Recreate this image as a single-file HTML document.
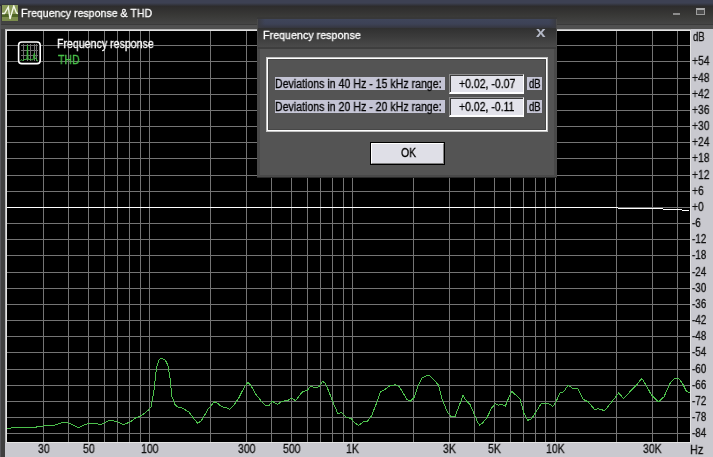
<!DOCTYPE html>
<html><head><meta charset="utf-8"><title>Frequency response &amp; THD</title>
<style>
html,body{margin:0;padding:0}
body{width:713px;height:457px;overflow:hidden;position:relative;background:#3f3f3f;font-family:"Liberation Sans",sans-serif;font-size:12px;line-height:13px;color:#111}
div,span{position:absolute;box-sizing:border-box;white-space:nowrap}
.t{transform-origin:0 0;will-change:transform;-webkit-text-stroke:0.3px}
#topstrip{left:0;top:0;width:713px;height:6px;background:linear-gradient(#3d4153 0,#3d4153 50%,#2e2e30 100%)}
#tbar{left:0;top:6px;width:713px;height:19px;background:linear-gradient(#2d2c2c,#3a3a38 55%,#464646)}
#tbar2{left:0;top:24px;width:713px;height:5px;background:linear-gradient(#3a3a3a 0,#3a3a3a 20%,#505050 21%,#505050)}
#ledge{left:0;top:6px;width:1px;height:451px;background:#58585c}
#ticon{left:2px;top:5px;width:16px;height:16px}
#panel{left:5px;top:29px;width:708px;height:428px;background:#c9c9cf}
#minb{left:673px;top:13px;width:7px;height:2px;background:#8c8c8c}
#maxb{left:696px;top:8px;width:9px;height:7px;border:1px solid #9c9c9c;border-top:2px solid #aaa;background:#4c4c4c}
/* dialog */
#dlg{left:257px;top:17px;width:300px;height:161px;background:linear-gradient(#494949 0,#494949 160px,#2a2a2a 160px)}
#dtop{left:0;top:0;width:300px;height:2px;background:#383838}
#dblue{left:1px;top:2px;width:298px;height:9px;background:linear-gradient(90deg,#3a3b42 0,rgba(58,59,66,0) 7px,rgba(58,59,66,0) 291px,#3a3b42 298px),linear-gradient(#3f455a 0,#3d4256 55%,#35363e 100%)}
#dtitle{left:1px;top:11px;width:298px;height:19px;background:linear-gradient(#303030,#3c3c3c 50%,#4a4a4a)}
#dline{left:1px;top:30px;width:298px;height:2px;background:#3e3e3e}
#dbody{left:3px;top:32px;width:294px;height:126px;background:#545454}
#grp{left:9px;top:40px;width:282px;height:75px;border:1px solid #c4c4c4;box-shadow:inset 0 0 0 1px #fff}
#grp2{left:11px;top:42px;width:278px;height:71px;border:1px solid #474747}
.lab{background:#c4c4d4}
.fld{background:#e3e3eb;border-top:1px solid #8c8c8c;border-left:1px solid #8c8c8c;border-bottom:2px solid #fff;border-right:1px solid #fff}
.fld i{position:absolute;left:0;top:0;right:0;bottom:0;border-top:1px solid #3c3c3c;border-left:1px solid #3c3c3c}
#okb{left:113px;top:125px;width:75px;height:23px;background:#dfdfe7;border:1px solid #000}
#okb i{position:absolute;left:0;top:0;right:0;bottom:0;border-top:1px solid #fff;border-left:1px solid #fff;border-right:1px solid #808080;border-bottom:1px solid #808080}
#xb{left:278.5px;top:7px;font:bold 15px/15px "Liberation Sans",sans-serif;color:#b4b8c6;will-change:transform;transform-origin:0 0;transform:scaleX(1.15)}
</style></head><body>
<div id="topstrip"></div><div id="tbar"></div><div id="tbar2"></div><div id="ledge"></div>
<svg id="ticon" style="position:absolute" viewBox="0 0 16 16"><rect width="16" height="16" fill="#8a9a5a"/><rect y="9" width="16" height="3" fill="#4e6424"/><rect y="12" width="16" height="4" fill="#7b8c4c"/><polyline points="0,8.5 2.5,8.5 6.3,2 8,14 11.8,1 14.5,8 16,8.5" fill="none" stroke="#f4f8e8" stroke-width="1.4"/></svg>
<div id="minb"></div><div id="maxb"></div>
<div id="panel"></div>
<svg id="plot" style="position:absolute;left:0;top:0" width="713" height="457" viewBox="0 0 713 457">
<rect x="5" y="29" width="686" height="414" fill="#e4e4e4"/>
<rect x="5" y="29" width="1" height="414" fill="#b8b8b8"/>
<rect x="5" y="29" width="686" height="1" fill="#b8b8b8"/>
<rect x="7" y="31" width="683" height="411" fill="#000"/>
<g fill="#747474" shape-rendering="crispEdges">
<rect x="7" y="45" width="683" height="1"/>
<rect x="7" y="61" width="683" height="1"/>
<rect x="7" y="78" width="683" height="1"/>
<rect x="7" y="94" width="683" height="1"/>
<rect x="7" y="110" width="683" height="1"/>
<rect x="7" y="126" width="683" height="1"/>
<rect x="7" y="142" width="683" height="1"/>
<rect x="7" y="158" width="683" height="1"/>
<rect x="7" y="175" width="683" height="1"/>
<rect x="7" y="191" width="683" height="1"/>
<rect x="7" y="207" width="683" height="1"/>
<rect x="7" y="223" width="683" height="1"/>
<rect x="7" y="239" width="683" height="1"/>
<rect x="7" y="255" width="683" height="1"/>
<rect x="7" y="272" width="683" height="1"/>
<rect x="7" y="288" width="683" height="1"/>
<rect x="7" y="304" width="683" height="1"/>
<rect x="7" y="320" width="683" height="1"/>
<rect x="7" y="336" width="683" height="1"/>
<rect x="7" y="352" width="683" height="1"/>
<rect x="7" y="369" width="683" height="1"/>
<rect x="7" y="385" width="683" height="1"/>
<rect x="7" y="401" width="683" height="1"/>
<rect x="7" y="417" width="683" height="1"/>
<rect x="7" y="433" width="683" height="1"/>
<rect x="43" y="31" width="1" height="411"/>
<rect x="68" y="31" width="1" height="411"/>
<rect x="88" y="31" width="1" height="411"/>
<rect x="104" y="31" width="1" height="411"/>
<rect x="117" y="31" width="1" height="411"/>
<rect x="129" y="31" width="1" height="411"/>
<rect x="140" y="31" width="1" height="411"/>
<rect x="149" y="31" width="1" height="411"/>
<rect x="210" y="31" width="1" height="411"/>
<rect x="246" y="31" width="1" height="411"/>
<rect x="271" y="31" width="1" height="411"/>
<rect x="291" y="31" width="1" height="411"/>
<rect x="307" y="31" width="1" height="411"/>
<rect x="320" y="31" width="1" height="411"/>
<rect x="332" y="31" width="1" height="411"/>
<rect x="343" y="31" width="1" height="411"/>
<rect x="352" y="31" width="1" height="411"/>
<rect x="413" y="31" width="1" height="411"/>
<rect x="449" y="31" width="1" height="411"/>
<rect x="474" y="31" width="1" height="411"/>
<rect x="494" y="31" width="1" height="411"/>
<rect x="510" y="31" width="1" height="411"/>
<rect x="523" y="31" width="1" height="411"/>
<rect x="535" y="31" width="1" height="411"/>
<rect x="545" y="31" width="1" height="411"/>
<rect x="555" y="31" width="1" height="411"/>
<rect x="616" y="31" width="1" height="411"/>
<rect x="652" y="31" width="1" height="411"/>
<rect x="677" y="31" width="1" height="411"/>
</g>
<polyline points="7.1,428.6 17.7,427.1 32.8,427.6 44.2,425.8 54.3,425.3 63.1,422.3 69.4,423.3 78.3,427.6 88.4,423.3 94.7,423.3 101.0,424.6 109.8,420.3 116.1,421.3 123.7,424.6 130.0,422.0 136.3,417.5 141.4,415.7 147.7,410.7 151.0,406.9 154.0,390.5 156.5,367.8 159.0,359.7 161.6,358.2 165.4,360.2 167.9,365.2 170.0,377.9 172.0,396.8 175.0,404.4 177.6,406.9 182.6,408.2 188.9,412.0 194.0,418.8 197.8,423.3 201.6,420.3 207.9,409.4 214.2,401.9 218.0,403.6 221.8,406.9 225.5,407.4 229.8,409.4 234.4,404.4 239.4,396.8 244.5,386.7 247.8,382.4 250.8,385.4 255.8,394.3 260.9,400.6 265.9,406.1 269.0,405.6 272.2,401.1 277.3,404.4 282.3,401.3 287.4,400.6 291.7,398.1 295.5,400.6 302.5,391.8 307.6,390.0 310.9,385.9 315.2,388.0 319.0,386.7 322.7,381.2 325.3,383.4 329.0,391.8 332.8,401.9 337.9,413.7 341.2,412.5 346.3,417.0 351.4,418.8 355.1,423.3 358.9,425.3 364.0,421.3 367.3,421.3 371.6,415.7 376.6,403.1 380.4,391.8 385.4,389.2 390.5,385.4 395.5,384.9 399.3,386.7 403.1,393.0 406.9,399.3 410.7,401.1 414.5,396.8 418.3,385.4 422.0,377.9 427.1,375.3 430.4,376.1 434.7,380.9 438.5,384.9 442.2,399.3 447.3,412.0 451.1,416.5 454.9,417.0 458.7,406.9 463.0,395.5 466.2,400.6 470.0,404.4 473.8,413.2 477.6,422.0 479.6,425.3 482.6,422.8 486.9,417.8 491.5,408.2 495.3,403.6 498.5,405.1 501.6,404.4 505.4,406.1 508.6,398.1 511.7,391.2 516.3,395.5 520.1,399.3 523.9,413.2 527.7,420.3 531.5,418.8 535.2,413.2 541.6,403.1 547.9,403.1 552.9,406.4 555.9,401.9 560.0,393.0 563.5,391.8 568.1,385.4 573.1,388.5 577.7,388.5 583.2,399.3 588.3,401.9 594.6,409.4 598.4,408.7 604.7,410.7 609.7,404.4 614.8,398.1 618.6,393.0 623.6,398.6 629.9,391.8 636.2,385.4 641.8,378.4 646.3,385.4 651.4,395.0 658.4,401.9 664.0,396.8 670.3,382.9 674.1,378.6 678.6,378.4 682.9,384.2 686.7,391.8 690.0,392.5" fill="none" stroke="#4cc04c" stroke-width="1" stroke-linejoin="round" shape-rendering="crispEdges"/>
<g fill="#fff" shape-rendering="crispEdges">
<rect x="7" y="207" width="611" height="1"/><rect x="618" y="208" width="45" height="1"/><rect x="663" y="209" width="19" height="1"/><rect x="682" y="210" width="7" height="1"/>
</g>
<g id="legicon">
<rect x="18.6" y="42" width="21.6" height="21.6" rx="3.2" fill="#000" stroke="#fff" stroke-width="1.6"/>
<g fill="#707070" shape-rendering="crispEdges"><rect x="23" y="44" width="1" height="17"/><rect x="27" y="44" width="1" height="17"/><rect x="30" y="44" width="1" height="17"/><rect x="34" y="44" width="1" height="17"/><rect x="36" y="44" width="1" height="17"/><rect x="21" y="45" width="17" height="1"/><rect x="21" y="50" width="17" height="1"/><rect x="21" y="55" width="17" height="1"/></g>
<polyline points="20.5,61 21.5,59.5 22.5,60.5 24,60 25,59 26,60 27,58 27.5,45 28,58 29,60 30,59 31,60 32,59.5 33,60 34,54 34.5,53 35,59 36,58 37,60.5 38,61" fill="none" stroke="#3cb83c" stroke-width="0.95"/>
</g>
</svg>
<div id="dlg">
<div id="dtop"></div><div id="dblue"></div><div id="dtitle"></div><div id="dline"></div><div id="dbody"></div>
<div id="grp"></div><div id="grp2"></div>
<div class="lab" style="left:18px;top:60px;width:170px;height:13px"></div>
<div class="lab" style="left:18px;top:83px;width:170px;height:13px"></div>
<div class="fld" style="left:192px;top:57px;width:75px;height:20px"><i></i></div>
<div class="fld" style="left:192px;top:80px;width:75px;height:20px"><i></i></div>
<div class="lab" style="left:270px;top:60px;width:15px;height:13px"></div>
<div class="lab" style="left:270px;top:83px;width:15px;height:13px"></div>
<div id="okb"><i></i></div>
<div id="xb">x</div>
</div>
<div class="t" style="left:21.04px;top:7px;color:#fff;font-size:11px;transform:scaleX(0.9630)">Frequency response &amp; THD</div>
<div class="t" style="left:56.62px;top:38px;color:#fff;font-size:12px;transform:scaleX(0.8843)">Frequency response</div>
<div class="t" style="left:58.20px;top:54px;color:#48c048;font-size:12px;transform:scaleX(0.8792)">THD</div>
<div class="t" style="left:37.71px;top:443px;color:#111;font-size:12px;transform:scaleX(0.8750)">30</div>
<div class="t" style="left:82.73px;top:443px;color:#111;font-size:12px;transform:scaleX(0.8750)">50</div>
<div class="t" style="left:140.76px;top:443px;color:#111;font-size:12px;transform:scaleX(0.8750)">100</div>
<div class="t" style="left:237.59px;top:443px;color:#111;font-size:12px;transform:scaleX(0.8750)">300</div>
<div class="t" style="left:282.62px;top:443px;color:#111;font-size:12px;transform:scaleX(0.8750)">500</div>
<div class="t" style="left:346.34px;top:443px;color:#111;font-size:12px;transform:scaleX(0.8750)">1K</div>
<div class="t" style="left:443.17px;top:443px;color:#111;font-size:12px;transform:scaleX(0.8750)">3K</div>
<div class="t" style="left:488.19px;top:443px;color:#111;font-size:12px;transform:scaleX(0.8750)">5K</div>
<div class="t" style="left:546.23px;top:443px;color:#111;font-size:12px;transform:scaleX(0.8750)">10K</div>
<div class="t" style="left:643.06px;top:443px;color:#111;font-size:12px;transform:scaleX(0.8750)">30K</div>
<div class="t" style="left:692.00px;top:55px;color:#111;font-size:12px;transform:scaleX(0.8600)">+54</div>
<div class="t" style="left:692.00px;top:72px;color:#111;font-size:12px;transform:scaleX(0.8600)">+48</div>
<div class="t" style="left:692.00px;top:88px;color:#111;font-size:12px;transform:scaleX(0.8600)">+42</div>
<div class="t" style="left:692.00px;top:104px;color:#111;font-size:12px;transform:scaleX(0.8600)">+36</div>
<div class="t" style="left:692.00px;top:120px;color:#111;font-size:12px;transform:scaleX(0.8600)">+30</div>
<div class="t" style="left:692.00px;top:136px;color:#111;font-size:12px;transform:scaleX(0.8600)">+24</div>
<div class="t" style="left:692.00px;top:152px;color:#111;font-size:12px;transform:scaleX(0.8600)">+18</div>
<div class="t" style="left:692.00px;top:169px;color:#111;font-size:12px;transform:scaleX(0.8600)">+12</div>
<div class="t" style="left:692.00px;top:185px;color:#111;font-size:12px;transform:scaleX(0.8600)">+6</div>
<div class="t" style="left:692.00px;top:201px;color:#111;font-size:12px;transform:scaleX(0.8600)">+0</div>
<div class="t" style="left:692.00px;top:217px;color:#111;font-size:12px;transform:scaleX(0.8200)">-6</div>
<div class="t" style="left:692.00px;top:233px;color:#111;font-size:12px;transform:scaleX(0.8200)">-12</div>
<div class="t" style="left:692.00px;top:249px;color:#111;font-size:12px;transform:scaleX(0.8200)">-18</div>
<div class="t" style="left:692.00px;top:266px;color:#111;font-size:12px;transform:scaleX(0.8200)">-24</div>
<div class="t" style="left:692.00px;top:282px;color:#111;font-size:12px;transform:scaleX(0.8200)">-30</div>
<div class="t" style="left:692.00px;top:298px;color:#111;font-size:12px;transform:scaleX(0.8200)">-36</div>
<div class="t" style="left:692.00px;top:314px;color:#111;font-size:12px;transform:scaleX(0.8200)">-42</div>
<div class="t" style="left:692.00px;top:330px;color:#111;font-size:12px;transform:scaleX(0.8200)">-48</div>
<div class="t" style="left:692.00px;top:346px;color:#111;font-size:12px;transform:scaleX(0.8200)">-54</div>
<div class="t" style="left:692.00px;top:363px;color:#111;font-size:12px;transform:scaleX(0.8200)">-60</div>
<div class="t" style="left:692.00px;top:379px;color:#111;font-size:12px;transform:scaleX(0.8200)">-66</div>
<div class="t" style="left:692.00px;top:395px;color:#111;font-size:12px;transform:scaleX(0.8200)">-72</div>
<div class="t" style="left:692.00px;top:411px;color:#111;font-size:12px;transform:scaleX(0.8200)">-78</div>
<div class="t" style="left:692.00px;top:427px;color:#111;font-size:12px;transform:scaleX(0.8200)">-84</div>
<div class="t" style="left:692.90px;top:31px;color:#111;font-size:12px;transform:scaleX(0.7929)">dB</div>
<div class="t" style="left:689.99px;top:444px;color:#111;font-size:12px;transform:scaleX(0.9077)">Hz</div>
<div class="t" style="left:263.03px;top:29px;color:#fff;font-size:11px;transform:scaleX(0.9747)">Frequency response</div>
<div class="t" style="left:275.12px;top:78px;color:#000;font-size:12px;transform:scaleX(0.8824)">Deviations in 40 Hz - 15 kHz range:</div>
<div class="t" style="left:275.12px;top:101px;color:#000;font-size:12px;transform:scaleX(0.8824)">Deviations in 20 Hz - 20 kHz range:</div>
<div class="t" style="left:459.00px;top:78px;color:#000;font-size:12px;transform:scaleX(0.8750)">+0.02, -0.07</div>
<div class="t" style="left:459.00px;top:101px;color:#000;font-size:12px;transform:scaleX(0.8730)">+0.02, -0.11</div>
<div class="t" style="left:529.00px;top:78px;color:#000;font-size:12px;transform:scaleX(0.7857)">dB</div>
<div class="t" style="left:529.00px;top:101px;color:#000;font-size:12px;transform:scaleX(0.7857)">dB</div>
<div class="t" style="left:400.50px;top:147px;color:#000;font-size:12px;transform:scaleX(0.8706)">OK</div>
</body></html>
